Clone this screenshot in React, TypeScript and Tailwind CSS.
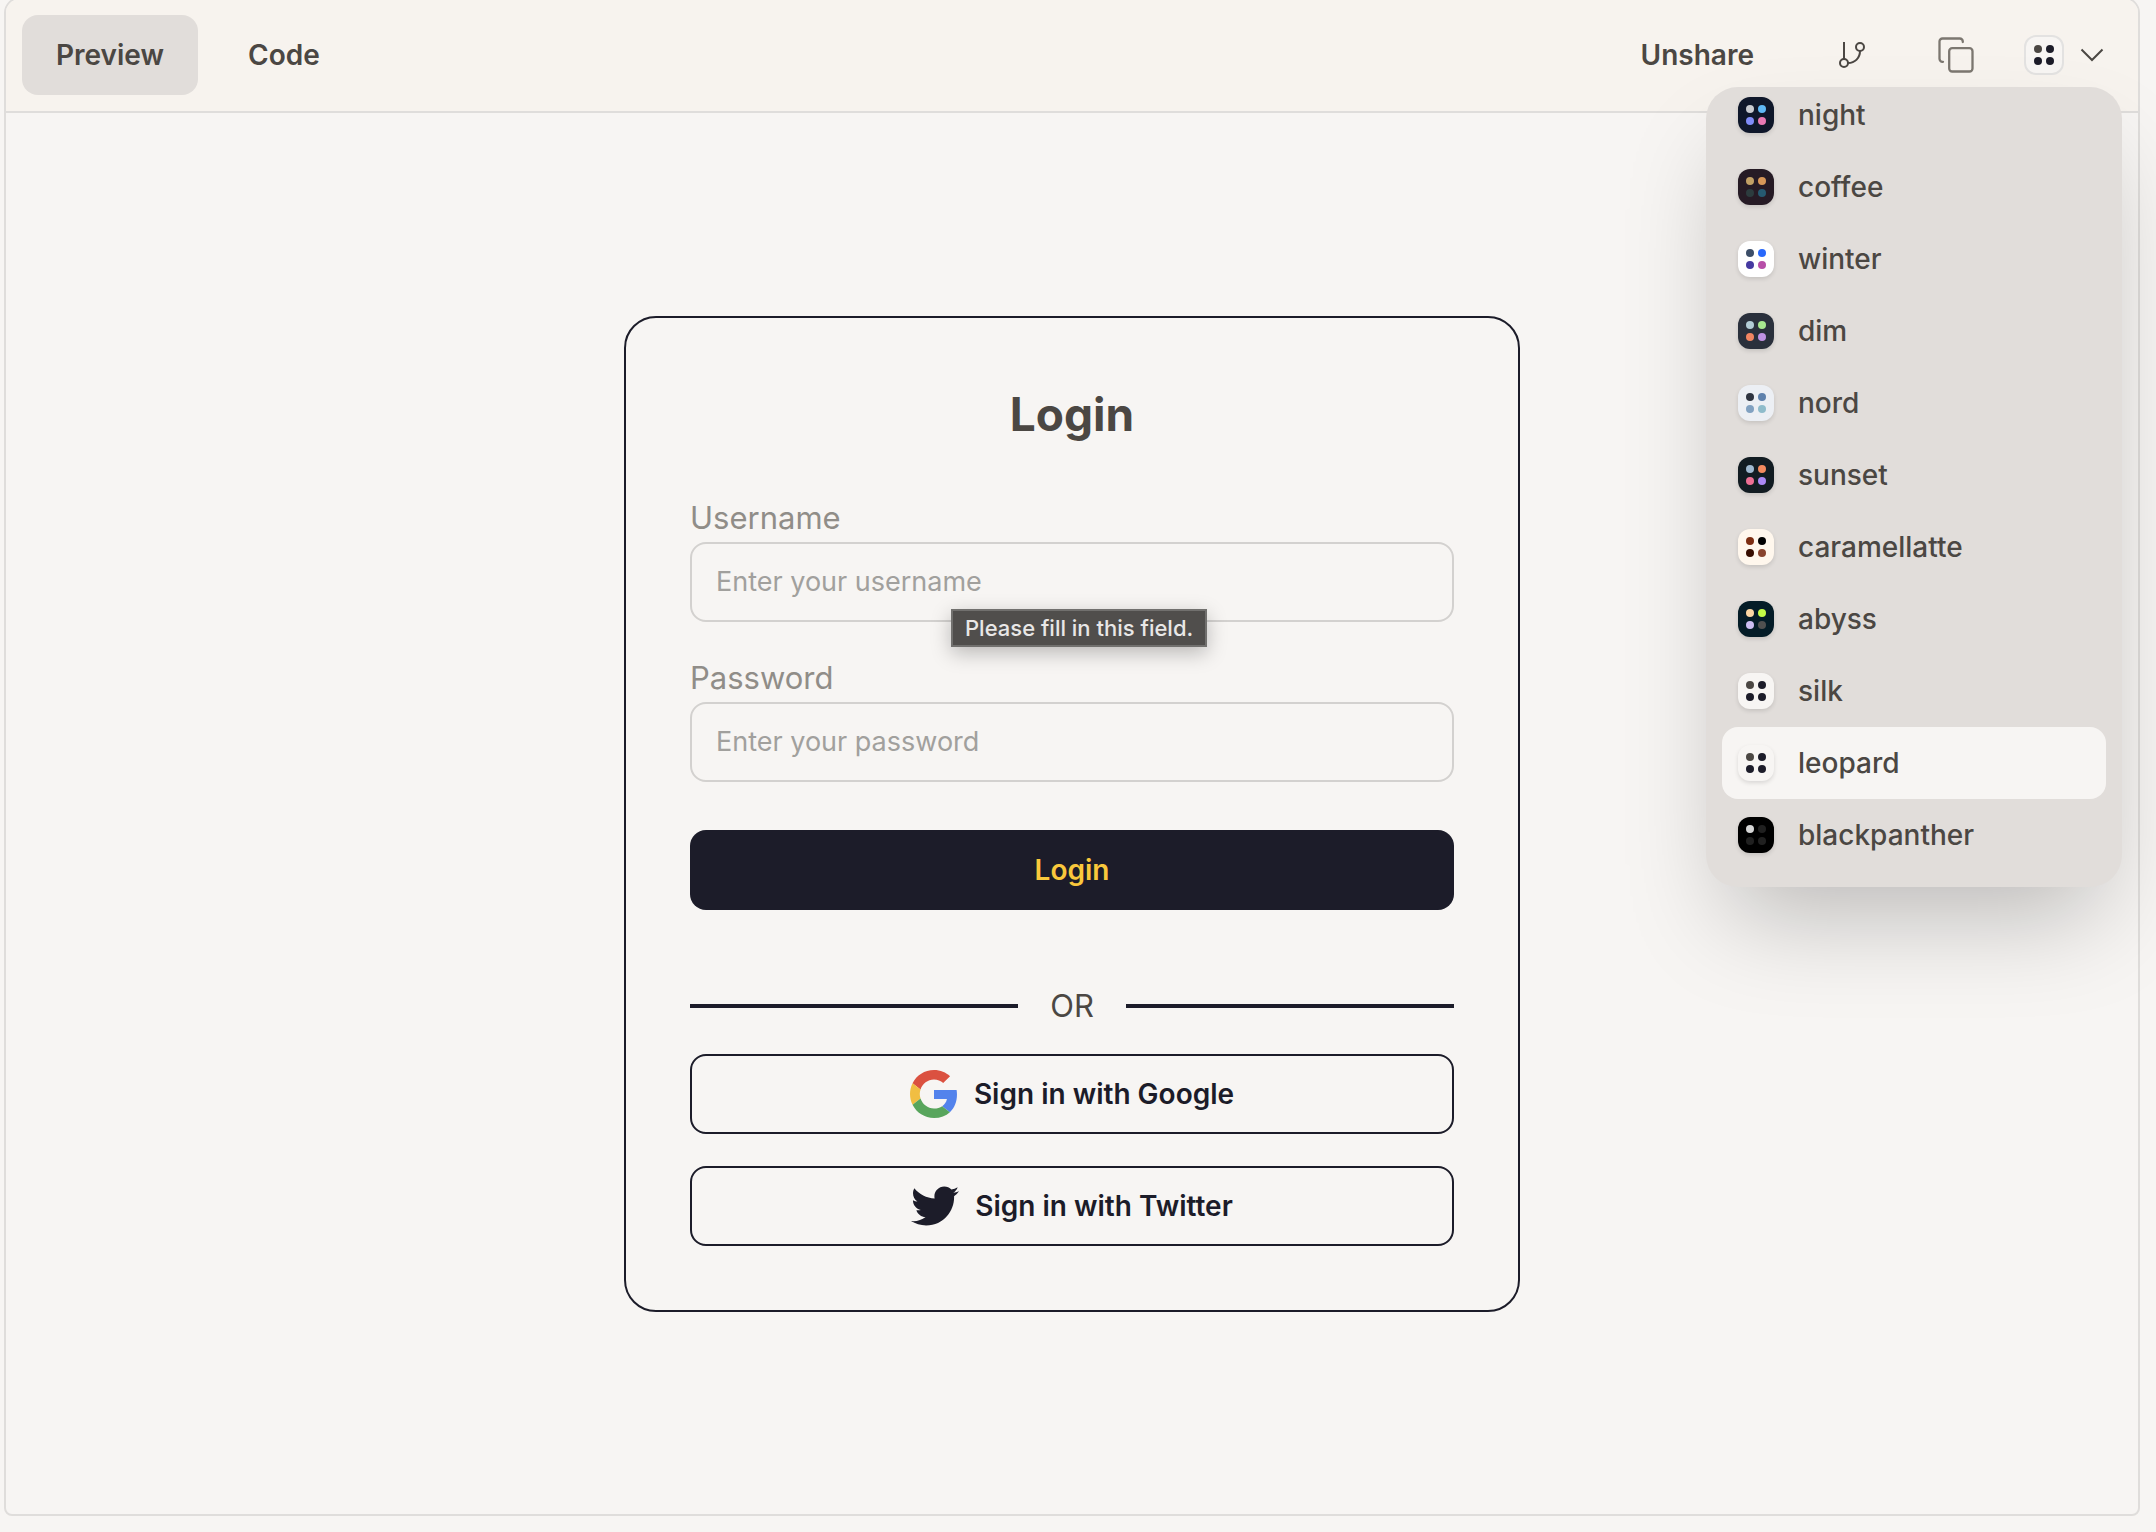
import React from 'react';
import { FaTwitter } from 'react-icons/fa';

interface Theme {
  name: string;
  base: string;
  dots: string[];
}

const themes: Theme[] = [
  { name: 'night', base: 'bg-[#0f172a]', dots: ['bg-[#c9cbd0]', 'bg-[#5fb8f5]', 'bg-[#818cf8]', 'bg-[#e879b4]'] },
  { name: 'coffee', base: 'bg-[#261b25]', dots: ['bg-[#c2a166]', 'bg-[#d69758]', 'bg-[#2c3c3e]', 'bg-[#265a70]'] },
  { name: 'winter', base: 'bg-white', dots: ['bg-[#3c4e68]', 'bg-[#2868fb]', 'bg-[#463aa1]', 'bg-[#b74fa8]'] },
  { name: 'dim', base: 'bg-[#2a303c]', dots: ['bg-[#b2ccd6]', 'bg-[#a7e78f]', 'bg-[#f28562]', 'bg-[#c092e4]'] },
  { name: 'nord', base: 'bg-[#eceff4]', dots: ['bg-[#2e3440]', 'bg-[#5e81ac]', 'bg-[#81a1c1]', 'bg-[#8fbccb]'] },
  { name: 'sunset', base: 'bg-[#121c22]', dots: ['bg-[#9fb9d0]', 'bg-[#f38a5f]', 'bg-[#ee6f94]', 'bg-[#ab88f5]'] },
  { name: 'caramellatte', base: 'bg-[#fff7ed]', dots: ['bg-[#7c2d12]', 'bg-black', 'bg-[#370d00]', 'bg-[#88432d]'] },
  { name: 'abyss', base: 'bg-[#041c27]', dots: ['bg-[#fbd6a4]', 'bg-[#c3fb46]', 'bg-[#cbbdf2]', 'bg-[#505050]'] },
  { name: 'silk', base: 'bg-[#f7f5f3]', dots: ['bg-[#4b4743]', 'bg-[#1c1c29]', 'bg-[#1c1c29]', 'bg-[#1c1c29]'] },
  { name: 'leopard', base: 'bg-[#f7f5f3]', dots: ['bg-[#4b4743]', 'bg-[#1c1c29]', 'bg-[#1c1c29]', 'bg-[#1c1c29]'] },
  { name: 'blackpanther', base: 'bg-black', dots: ['bg-[#d6d6d6]', 'bg-[#202020]', 'bg-[#202020]', 'bg-[#202020]'] },
];

const Dots: React.FC<{ colors: string[] }> = ({ colors }) => (
  <span className="grid grid-cols-2 gap-1">
    {colors.map((color, i) => (
      <span key={i} className={`size-2 rounded-full ${color}`} />
    ))}
  </span>
);

const BranchIcon: React.FC = () => (
  <svg width="28" height="28" viewBox="0 0 28 28" fill="none" stroke="currentColor" strokeWidth="2">
    <path d="M6 1v17" />
    <circle cx="6" cy="22" r="4" />
    <circle cx="22" cy="6" r="4" />
    <path d="M22 10c0 7-5 12-12 12" />
  </svg>
);

const CopyIcon: React.FC = () => (
  <svg width="36" height="36" viewBox="0 0 36 36" fill="none" stroke="currentColor" strokeWidth="2.3" strokeLinecap="round">
    <rect x="11.200" y="11.200" width="23.300" height="23.300" rx="3" />
    <path d="M5 24.800H4.500a3 3 0 0 1-3-3V4.500a3 3 0 0 1 3-3h17.300a3 3 0 0 1 3 3V5" />
  </svg>
);

const GoogleIcon: React.FC = () => (
  <svg width="48" height="48" viewBox="0 0 48 48">
    <path fill="#db5140" d="M24 9.500c3.540 0 6.710 1.220 9.210 3.600l6.850-6.850C35.900 2.380 30.470 0 24 0 14.620 0 6.510 5.380 2.560 13.220l7.980 6.190C12.430 13.720 17.740 9.500 24 9.500z" />
    <path fill="#5383ec" d="M46.980 24.550c0-1.570-.15-3.090-.38-4.550H24v9.020h12.940c-.58 2.960-2.260 5.480-4.780 7.180l7.730 6c4.510-4.180 7.090-10.360 7.090-17.650z" />
    <path fill="#f1be42" d="M10.530 28.590c-.48-1.450-.76-2.990-.76-4.590s.27-3.140.76-4.590l-7.980-6.190C.92 16.460 0 20.120 0 24c0 3.880.92 7.540 2.560 10.780l7.970-6.190z" />
    <path fill="#58a55c" d="M24 48c6.480 0 11.930-2.130 15.890-5.810l-7.730-6c-2.150 1.450-4.920 2.300-8.160 2.300-6.260 0-11.570-4.220-13.470-9.910l-7.980 6.190C6.510 42.620 14.620 48 24 48z" />
  </svg>
);

const ThemeMenu: React.FC = () => (
  <ul className="absolute right-4 top-[88px] z-10 flex h-[800px] w-[416px] flex-col justify-end overflow-hidden rounded-[32px] bg-[#e1ddda] px-4 pb-4 shadow-[0_50px_100px_-24px_rgba(0,0,0,0.25)]">
    {themes.map((theme) => (
      <li key={theme.name} className="shrink-0">
        <button
          type="button"
          className={`flex h-18 w-full items-center gap-6 rounded-2xl px-4 text-[28px] font-medium ${theme.name === 'leopard' ? 'bg-[#f7f5f3]' : ''}`}
        >
          <span className={`flex size-9 items-center justify-center rounded-xl shadow-[0_2px_4px_rgba(0,0,0,0.12)] ${theme.base}`}>
            <Dots colors={theme.dots} />
          </span>
          {theme.name}
        </button>
      </li>
    ))}
  </ul>
);

const Toolbar: React.FC = () => (
  <header className="flex items-center justify-between rounded-t-[14px] border-b-2 border-[#dfdddb] bg-[#f7f3ee] p-4">
    <div className="flex gap-4 text-[28px] font-semibold">
      <button type="button" className="h-20 rounded-2xl bg-[#e1ddda] px-[34px]">Preview</button>
      <button type="button" className="h-20 rounded-2xl px-[34px]">Code</button>
    </div>
    <div className="flex items-center">
      <button type="button" className="h-20 px-[34px] text-[28px] font-semibold">Unshare</button>
      <button type="button" aria-label="Fork" className="ml-3 flex h-20 w-26 items-center justify-center">
        <BranchIcon />
      </button>
      <button type="button" aria-label="Copy" className="flex h-20 w-26 items-center justify-center text-[#7c7770]">
        <CopyIcon />
      </button>
      <button type="button" aria-label="Theme" className="flex h-20 items-center gap-4 pr-[18px] pl-4">
        <span className="flex size-10 items-center justify-center rounded-xl border-2 border-[#e3e2e1] bg-[#f7f5f3]">
          <Dots colors={themes[9].dots} />
        </span>
        <svg width="24" height="24" viewBox="0 0 24 24" fill="none" stroke="currentColor" strokeWidth="2">
          <path d="M1.500 6.500l10.500 10.500L22.500 6.500" />
        </svg>
      </button>
    </div>
  </header>
);

const LoginCard: React.FC = () => (
  <form className="w-full max-w-[896px] rounded-[32px] border-2 border-[#1c1c29] p-16">
    <h2 className="mb-12 text-center text-[46px]/16 font-bold">Login</h2>

    <div className="relative mb-8">
      <label htmlFor="username" className="block text-[31px]/12 text-[#908d88]">Username</label>
      <input
        id="username"
        type="text"
        required
        placeholder="Enter your username"
        className="block h-20 w-full rounded-2xl border-2 border-[#d3d1cf] px-6 text-[27px] placeholder:text-[#a1a09d]"
      />
      <div role="tooltip" className="absolute left-[261px] top-[115px] border-2 border-[#71706e] bg-[#504e4c] px-3 text-[22px]/[34px] font-medium whitespace-nowrap text-[#e8e7e6] shadow-[0_6px_20px_rgba(0,0,0,0.25)]">
        Please fill in this field.
      </div>
    </div>

    <div className="mb-12">
      <label htmlFor="password" className="block text-[31px]/12 text-[#908d88]">Password</label>
      <input
        id="password"
        type="password"
        required
        placeholder="Enter your password"
        className="block h-20 w-full rounded-2xl border-2 border-[#d3d1cf] px-6 text-[27px] placeholder:text-[#a1a09d]"
      />
    </div>

    <button type="submit" className="h-20 w-full rounded-2xl bg-[#1c1c29] text-[28px] font-semibold text-[#f9c83c]">Login</button>

    <div className="mt-18 mb-6 flex items-center gap-8 text-[31px]/12">
      <span className="h-1 flex-1 bg-[#1c1c29]" />
      OR
      <span className="h-1 flex-1 bg-[#1c1c29]" />
    </div>

    <div className="flex flex-col gap-8 text-[28px] font-semibold text-[#1c1c29]">
      <button type="button" className="flex h-20 items-center justify-center gap-4 rounded-2xl border-2 border-[#1c1c29]">
        <GoogleIcon />
        Sign in with Google
      </button>
      <button type="button" className="flex h-20 items-center justify-center gap-4 rounded-2xl border-2 border-[#1c1c29]">
        <FaTwitter className="size-12" />
        Sign in with Twitter
      </button>
    </div>
  </form>
);

const App: React.FC = () => {
  return (
    <div className="flex h-screen flex-col overflow-hidden bg-[#f7f5f3] pr-4 pb-4 pl-1 font-['Inter',sans-serif] text-[#4b4743]">
      <div className="relative -mt-[3px] flex flex-1 flex-col rounded-t-2xl rounded-b-lg border-2 border-[#dfdddb]">
        <Toolbar />
        <main className="flex flex-1 items-center justify-center">
          <LoginCard />
        </main>
        <ThemeMenu />
      </div>
    </div>
  );
};

export default App;
